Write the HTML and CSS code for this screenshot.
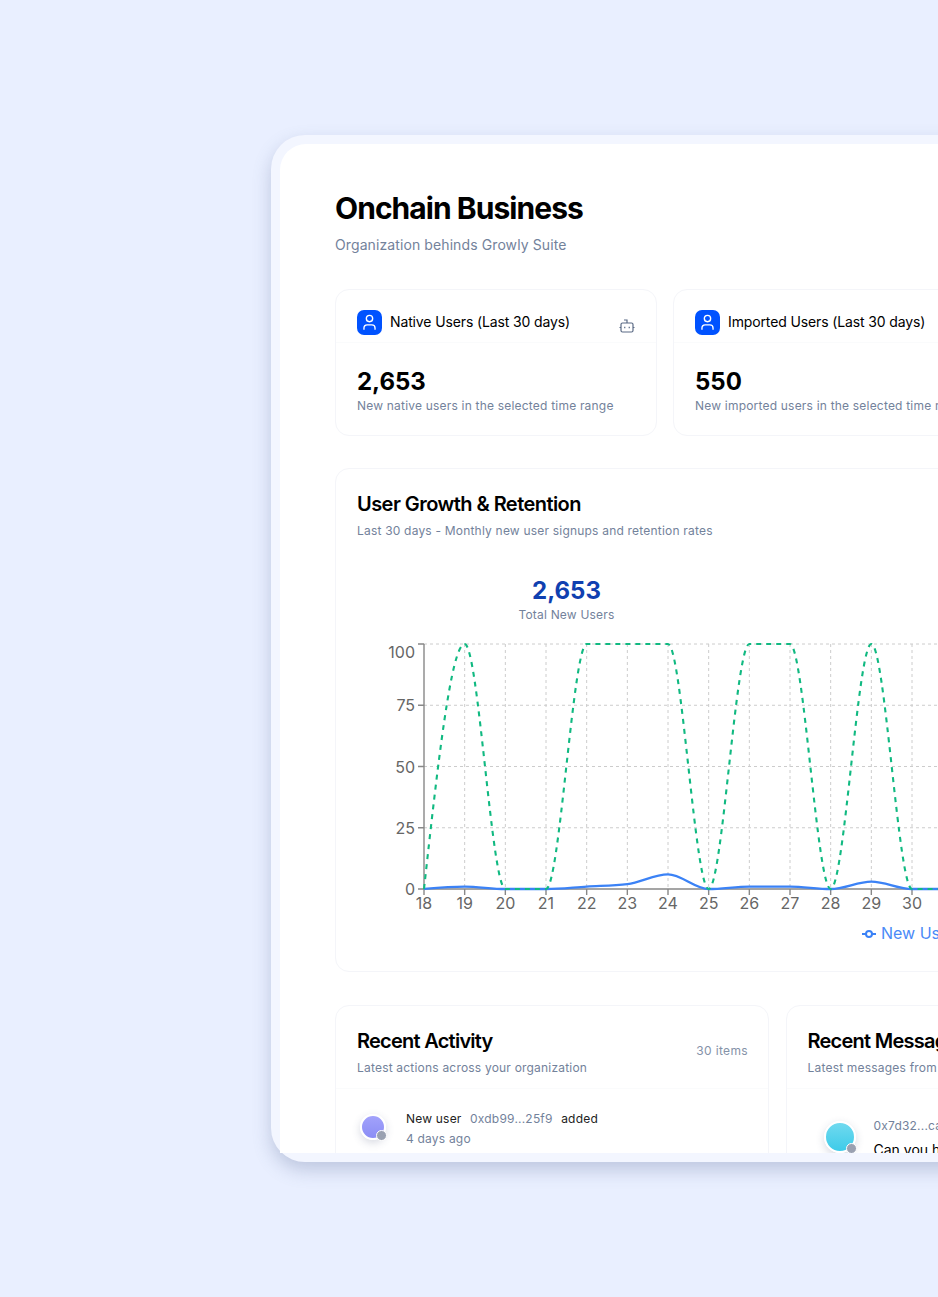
FILE: index.html
```html
<!DOCTYPE html>
<html lang="en">
<head>
  <meta charset="UTF-8">
  <title>Onchain Business</title>
  <link rel="stylesheet" href="styles.css">
</head>
<body>

<div class="frame">
  <div class="screen">
    <h1>Onchain Business</h1>
    <p class="subtitle">Organization behinds Growly Suite</p>

    <div class="stat-row">
      <div class="card">
        <div class="stat-head">
          <span class="icon-box">
            <svg viewBox="0 0 24 24"><path d="M19 21v-2a4 4 0 0 0-4-4H9a4 4 0 0 0-4 4v2"/><circle cx="12" cy="7" r="4"/></svg>
          </span>
          <span class="stat-title">Native Users (Last 30 days)</span>
          <svg class="bot" viewBox="0 0 24 24"><path d="M12 8V4H8"/><rect x="4" y="8" width="16" height="12" rx="2"/><path d="M2 14h2M20 14h2M15 13v2M9 13v2"/></svg>
        </div>
        <div class="stat-body">
          <div class="stat-value">2,653</div>
          <div class="small">New native users in the selected time range</div>
        </div>
      </div>
      <div class="card">
        <div class="stat-head">
          <span class="icon-box">
            <svg viewBox="0 0 24 24"><path d="M19 21v-2a4 4 0 0 0-4-4H9a4 4 0 0 0-4 4v2"/><circle cx="12" cy="7" r="4"/></svg>
          </span>
          <span class="stat-title">Imported Users (Last 30 days)</span>
        </div>
        <div class="stat-body">
          <div class="stat-value">550</div>
          <div class="small">New imported users in the selected time range</div>
        </div>
      </div>
      <div class="card"></div>
    </div>

    <div class="card chart-card">
      <h2>User Growth &amp; Retention</h2>
      <p class="small chart-sub">Last 30 days - Monthly new user signups and retention rates</p>
      <div class="chart-total">
        <div class="total-value">2,653</div>
        <div class="total-label">Total New Users</div>
      </div>
      <svg class="chart" viewBox="357 636 700 320">
        <g class="grid">
          <path d="M424 644H1040M424 705.25H1040M424 766.5H1040M424 827.75H1040"/>
          <path d="M464.67 644V889M505.33 644V889M546 644V889M586.67 644V889M627.33 644V889M668 644V889M708.67 644V889M749.33 644V889M790 644V889M830.67 644V889M871.33 644V889M912 644V889M952.67 644V889"/>
        </g>
        <g class="axis">
          <path d="M424 644V889H1040"/>
          <path d="M418 644h6M418 705.25h6M418 766.5h6M418 827.75h6M418 889h6"/>
          <path d="M424 889v6M464.67 889v6M505.33 889v6M546 889v6M586.67 889v6M627.33 889v6M668 889v6M708.67 889v6M749.33 889v6M790 889v6M830.67 889v6M871.33 889v6M912 889v6M952.67 889v6"/>
        </g>
        <g class="y-labels">
          <text x="415" y="657.5">100</text>
          <text x="415" y="711">75</text>
          <text x="415" y="772.5">50</text>
          <text x="415" y="833.5">25</text>
          <text x="415" y="894.5">0</text>
        </g>
        <g class="x-labels">
          <text x="424" y="909">18</text>
          <text x="464.67" y="909">19</text>
          <text x="505.33" y="909">20</text>
          <text x="546" y="909">21</text>
          <text x="586.67" y="909">22</text>
          <text x="627.33" y="909">23</text>
          <text x="668" y="909">24</text>
          <text x="708.67" y="909">25</text>
          <text x="749.33" y="909">26</text>
          <text x="790" y="909">27</text>
          <text x="830.67" y="909">28</text>
          <text x="871.33" y="909">29</text>
          <text x="912" y="909">30</text>
        </g>
        <path class="line-new" d="M424 889c13.56 -1.22 27.11 -2.45 40.67 -2.45c13.56 0 27.11 2.45 40.67 2.45h40.67c13.56 0 27.11 -1.63 40.67 -2.45c13.56 -.82 27.11 -.82 40.67 -2.45c13.56 -1.63 27.11 -9.8 40.67 -9.8c13.56 0 27.11 14.7 40.67 14.7c13.56 0 27.11 -2.45 40.67 -2.45h40.67c13.56 0 27.11 2.45 40.67 2.45c13.56 0 27.11 -7.35 40.67 -7.35c13.56 0 27.11 7.35 40.67 7.35h40.67"/>
        <path class="line-ret" d="M424 889C437.56 766.5 451.11 644 464.67 644c13.56 0 27.11 245 40.67 245h40.67c13.56 0 27.11 -245 40.67 -245h81.33c13.56 0 27.11 245 40.67 245c13.56 0 27.11 -245 40.67 -245h40.67c13.56 0 27.11 245 40.67 245c13.56 0 27.11 -245 40.67 -245c13.56 0 27.11 245 40.67 245h40.67"/>
        <g class="legend">
          <path d="M862 934h14"/>
          <circle cx="869" cy="934" r="3"/>
          <text x="881" y="939">New Users</text>
        </g>
      </svg>
    </div>

    <div class="recent-row">
      <div class="card">
        <div class="recent-head">
          <div>
            <h2>Recent Activity</h2>
            <p class="small recent-sub">Latest actions across your organization</p>
          </div>
          <span class="items">30 items</span>
        </div>
        <div class="activity">
          <div class="avatar avatar-purple"><span class="dot"></span></div>
          <div>
            <div class="activity-line"><span>New user</span><span class="address">0xdb99...25f9</span><span>added</span></div>
            <div class="activity-time">4 days ago</div>
          </div>
        </div>
      </div>
      <div class="card">
        <div class="recent-head">
          <div>
            <h2>Recent Messages</h2>
            <p class="small recent-sub">Latest messages from your users</p>
          </div>
        </div>
        <div class="message">
          <div class="avatar avatar-cyan"><span class="dot"></span></div>
          <div>
            <div class="address">0x7d32...ca10</div>
            <div class="message-text">Can you help me with this?</div>
          </div>
        </div>
      </div>
    </div>
  </div>
</div>

</body>
</html>
```

FILE: styles.css
```css
* {
  margin: 0;
  padding: 0;
  box-sizing: border-box;
}

html, body {
  height: 100%;
  overflow: hidden;
}

body {
  font-family: Inter, "Liberation Sans", sans-serif;
  background: #e9efff;
  padding: 135px 0 0 271px;
  color: #000;
}

.frame {
  width: 1100px;
  height: 1027px;
  padding: 9px;
  background: #f3f6ff;
  border-radius: 34px;
  box-shadow: 0 8px 18px rgba(90, 105, 150, 0.3);
}

.screen {
  height: 1009px;
  overflow: hidden;
  background: #fff;
  border-radius: 26px 26px 0 0;
  padding: 44px 0 0 55px;
}

h1 {
  font-size: 30px;
  line-height: 40px;
  font-weight: 700;
  letter-spacing: -0.95px;
}

.subtitle {
  margin-top: 7px;
  font-size: 14px;
  line-height: 20px;
  color: #73829b;
  letter-spacing: 0.1px;
}

.card {
  background: #fff;
  border: 1px solid #f4f5f9;
  border-radius: 14px;
}

.stat-row {
  display: grid;
  grid-template-columns: repeat(3, 322px);
  gap: 16px;
  margin-top: 34px;
}

.stat-head {
  display: flex;
  align-items: center;
  gap: 8px;
  height: 53px;
  padding: 20px 21px 7px;
  border-bottom: 1px solid #fafbfc;
}

.icon-box {
  display: flex;
  align-items: center;
  justify-content: center;
  width: 25px;
  height: 25px;
  border-radius: 7px;
  background: #0052ff;
}

.icon-box svg {
  width: 19px;
  height: 19px;
  fill: none;
  stroke: #fff;
  stroke-width: 1.7;
}

.stat-title {
  margin-bottom: 2px;
  font-size: 14px;
  font-weight: 400;
  letter-spacing: -0.13px;
}

.bot {
  width: 18px;
  height: 18px;
  margin-left: auto;
  margin-right: -1px;
  position: relative;
  top: 3px;
  fill: none;
  stroke: #5b6b85;
  stroke-width: 1.6;
}

.stat-body {
  padding: 24px 21px 0;
  height: 92px;
}

.stat-value {
  font-size: 24px;
  line-height: 30px;
  font-weight: 700;
}

.small {
  font-size: 12px;
  line-height: 18px;
  color: #73829b;
  letter-spacing: 0.2px;
  white-space: nowrap;
}

.chart-card {
  height: 504px;
  margin-top: 32px;
  padding: 21px 0 0 21px;
}

h2 {
  font-size: 20px;
  line-height: 28px;
  font-weight: 600;
  letter-spacing: -0.55px;
}

.chart-sub {
  margin-top: 4px;
}

.chart-total {
  width: 419px;
  margin-top: 36px;
  text-align: center;
}

.total-value {
  font-size: 24px;
  line-height: 30px;
  font-weight: 700;
  color: #1040b0;
}

.total-label {
  font-size: 12px;
  line-height: 18px;
  letter-spacing: 0.2px;
  color: #73829b;
}

.chart {
  display: block;
  width: 700px;
  height: 320px;
  margin-top: 12px;
}

.grid path {
  fill: none;
  stroke: #ccc;
  stroke-dasharray: 3 3;
}

.axis path {
  fill: none;
  stroke: #888;
  stroke-width: 1.4;
}

.chart text {
  font-size: 16px;
  fill: #666;
}

.y-labels text {
  text-anchor: end;
}

.x-labels text {
  text-anchor: middle;
}

.line-new {
  fill: none;
  stroke: #3b82f6;
  stroke-width: 2.3;
}

.line-ret {
  fill: none;
  stroke: #10b981;
  stroke-width: 2.1;
  stroke-dasharray: 5 5;
}

.legend path {
  stroke: #3b82f6;
  stroke-width: 2;
}

.legend circle {
  fill: #fff;
  stroke: #3b82f6;
  stroke-width: 2;
}

.chart .legend text {
  fill: #4a8af7;
}

.recent-row {
  display: grid;
  grid-template-columns: 434px 560px;
  gap: 16.5px;
  margin-top: 33px;
}

.recent-head {
  display: flex;
  justify-content: space-between;
  height: 83px;
  padding: 21px 20px 0 21px;
  border-bottom: 1px solid #fafbfc;
}

.recent-head h2 {
  letter-spacing: -0.75px;
}

.recent-sub {
  margin-top: 4px;
}

.items {
  margin-top: 15px;
  font-size: 12px;
  line-height: 18px;
  color: #8592a8;
  letter-spacing: 0.35px;
}

.activity {
  display: flex;
  gap: 20px;
  padding: 21px 0 20px 24px;
}

.avatar {
  position: relative;
  flex: none;
  border-radius: 50%;
  border: 2px solid #fff;
  box-shadow: 0 3px 8px rgba(60, 70, 110, 0.2);
}

.avatar-purple {
  width: 26px;
  height: 26px;
  margin-top: 4px;
  background: linear-gradient(180deg, #a2a2fb, #8b8df5);
}

.avatar-cyan {
  width: 32px;
  height: 32px;
  margin-top: 4px;
  background: linear-gradient(180deg, #70d9ef, #3ecbe9);
}

.dot {
  position: absolute;
  right: -3px;
  bottom: -3px;
  width: 11px;
  height: 11px;
  border-radius: 50%;
  background: #9aa1b1;
  border: 1px solid #fff;
}

.activity-line {
  display: flex;
  gap: 8.5px;
  font-size: 12px;
  line-height: 18px;
  letter-spacing: 0.2px;
  color: #222;
}

.address {
  color: #73829b;
  font-size: 12px;
  line-height: 18px;
  letter-spacing: 0.2px;
}

.activity-time {
  margin-top: 2px;
  font-size: 12px;
  line-height: 18px;
  letter-spacing: 0.2px;
  color: #73829b;
}

.message {
  display: flex;
  gap: 18px;
  padding: 28px 0 0 37px;
}

.message-text {
  margin-top: 5px;
  font-size: 14px;
  line-height: 20px;
}
```
